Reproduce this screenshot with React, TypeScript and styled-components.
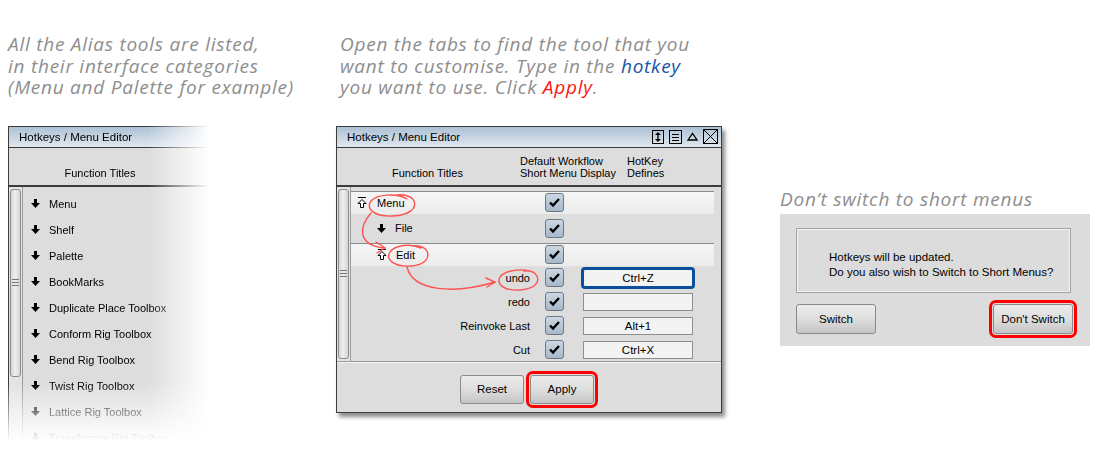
import styled, { createGlobalStyle } from 'styled-components';

const GlobalStyle = createGlobalStyle`
  html, body {
    margin: 0;
    padding: 0;
    background: #fff;
  }
  body {
    width: 1100px;
    height: 470px;
    overflow: hidden;
    font-family: "Liberation Sans", Arial, sans-serif;
    font-size: 11px;
    color: #000;
  }
`;

const Page = styled.div`
  display: flex;
  height: 470px;
  padding-top: 34px;
  box-sizing: border-box;
`;

const Column = styled.div<{ $width: number; $pad?: number }>`
  display: flex;
  flex-direction: column;
  width: ${(p) => p.$width}px;
  padding-left: ${(p) => p.$pad ?? 0}px;
  box-sizing: border-box;
  flex-shrink: 0;
`;

const Caption = styled.p<{ $indent?: number; $top?: number }>`
  margin: ${(p) => p.$top ?? 0}px 0 0 ${(p) => p.$indent ?? 0}px;
  font-family: "Open Sans", "DejaVu Sans", sans-serif;
  font-style: italic;
  font-size: 19px;
  line-height: 21.5px;
  color: #8e8e8e;
  letter-spacing: 0.75px;
  white-space: nowrap;
`;

const Hot = styled.span`
  color: #1656a6;
`;

const Red = styled.span`
  color: #ff1414;
`;

/* ---------- editor window ---------- */

const FadeRight = styled.div`
  margin-top: 27px;
  width: 212px;
  -webkit-mask-image: linear-gradient(to right, #000 66%, transparent 95%);
  mask-image: linear-gradient(to right, #000 66%, transparent 95%);
`;

const FadeDown = styled.div`
  -webkit-mask-image: linear-gradient(to bottom, #000 79%, transparent 97%);
  mask-image: linear-gradient(to bottom, #000 79%, transparent 97%);
`;

const Window = styled.div<{ $width: number; $height: number; $shadow?: boolean }>`
  position: relative;
  display: flex;
  flex-direction: column;
  width: ${(p) => p.$width}px;
  height: ${(p) => p.$height}px;
  box-sizing: border-box;
  border: 1px solid #3c3c3c;
  background: #dddddd;
  box-shadow: ${(p) => (p.$shadow ? '3px 4px 4px rgba(0,0,0,0.45)' : 'none')};
`;

const TitleBar = styled.div`
  display: flex;
  align-items: center;
  height: 20px;
  padding: 0 3px 0 10px;
  background: linear-gradient(#adc1d5, #e0e7ee);
  border-bottom: 1px solid #3a3a3a;
  font-size: 11.5px;
  flex-shrink: 0;
`;

const TitleText = styled.span`
  flex: 1;
`;

const TitleIcons = styled.div`
  display: flex;
  align-items: center;
  gap: 5px;
`;

const Header = styled.div<{ $pad: number }>`
  display: flex;
  align-items: flex-end;
  height: 39px;
  padding: 0 0 6px ${(p) => p.$pad}px;
  box-sizing: border-box;
  border-bottom: 2px solid #3c3c3c;
  line-height: 12px;
  flex-shrink: 0;
`;

const HeaderCell = styled.div<{ $width?: number; $center?: boolean }>`
  width: ${(p) => (p.$width ? `${p.$width}px` : 'auto')};
  text-align: ${(p) => (p.$center ? 'center' : 'left')};
`;

const Body = styled.div<{ $height?: number }>`
  display: flex;
  flex: ${(p) => (p.$height ? 'none' : '1')};
  height: ${(p) => (p.$height ? `${p.$height}px` : 'auto')};
`;

const Scrollbar = styled.div`
  display: flex;
  flex-direction: column;
  width: 14px;
  padding: 2px 1px;
  box-sizing: border-box;
  background: #e3e3e3;
  border-right: 1px solid #9c9c9c;
  flex-shrink: 0;
`;

const Thumb = styled.div<{ $height?: number }>`
  display: flex;
  align-items: center;
  justify-content: center;
  height: ${(p) => (p.$height ? `${p.$height}px` : 'auto')};
  flex: ${(p) => (p.$height ? 'none' : '1')};
  border: 1px solid #8e8e8e;
  border-radius: 3px;
  background: linear-gradient(to right, #d6d6d6, #efefef 45%, #d4d4d4);
`;

const Grip = styled.div`
  width: 7px;
  height: 7px;
  background: repeating-linear-gradient(#777 0 1px, transparent 1px 3px);
`;

const List = styled.div<{ $padTop: number; $padRight?: number }>`
  flex: 1;
  padding: ${(p) => p.$padTop}px ${(p) => p.$padRight ?? 0}px 0 0;
  overflow: hidden;
`;

/* left window rows */

const MenuItem = styled.div`
  display: flex;
  align-items: center;
  gap: 9px;
  height: 26px;
  padding-left: 8px;
  white-space: nowrap;
`;

/* right window rows */

const Row = styled.div<{ $height: number; $band?: boolean; $line?: boolean }>`
  display: grid;
  grid-template-columns: 194px 38px 110px;
  align-items: center;
  height: ${(p) => p.$height}px;
  border-top: ${(p) => (p.$line ? '1px solid #8a8a8a' : 'none')};
  background: ${(p) => (p.$band ? 'linear-gradient(#f5f5f5, #ececec)' : 'transparent')};
`;

const TreeName = styled.div<{ $indent: number; $gap: number }>`
  display: flex;
  align-items: center;
  gap: ${(p) => p.$gap}px;
  padding-left: ${(p) => p.$indent}px;
`;

const LeafName = styled.div`
  text-align: right;
  padding-right: 15px;
`;

const Check = styled.div`
  display: flex;
  align-items: center;
  justify-content: center;
  width: 19px;
  height: 19px;
  box-sizing: border-box;
  border: 1px solid #6c7886;
  border-radius: 3px;
  background: linear-gradient(#cbd7e3, #a6b8cb);
`;

const KeyField = styled.div<{ $focus?: boolean }>`
  height: 18px;
  line-height: 16px;
  box-sizing: border-box;
  text-align: center;
  background: #f3f3f3;
  border: 1px solid ${(p) => (p.$focus ? '#0a4f9c' : '#8e8e8e')};
  box-shadow: ${(p) => (p.$focus ? '0 0 0 2px #0a4f9c' : 'none')};
  border-radius: ${(p) => (p.$focus ? '2px' : '0')};
  font-size: 11.5px;
`;

const Footer = styled.div`
  display: flex;
  align-items: center;
  justify-content: center;
  gap: 2px;
  flex: 1;
  border-top: 1px solid #9a9a9a;
  box-shadow: inset 0 1px 0 #f4f4f4;
  padding-top: 5px;
`;

const Button = styled.button<{ $width: number; $height: number }>`
  width: ${(p) => p.$width}px;
  height: ${(p) => p.$height}px;
  padding: 0;
  border: 1px solid #8a8a8a;
  border-radius: 3px;
  background: linear-gradient(#ececec, #dcdcdc 55%, #c4c4c4);
  font-family: "Liberation Sans", Arial, sans-serif;
  font-size: 11.5px;
  color: #000;
`;

const RedRing = styled.div`
  display: flex;
  padding: 1px;
  border: 3px solid #f00;
  border-radius: 7px;
`;

const Marks = styled.svg`
  position: absolute;
  left: 0;
  top: 0;
  pointer-events: none;
`;

/* ---------- switch dialog ---------- */

const Dialog = styled.div`
  margin-top: 3px;
  width: 310px;
  height: 132px;
  padding: 14px 13px 0 16px;
  box-sizing: border-box;
  background: #dcdcdc;
`;

const Message = styled.div`
  width: 275px;
  height: 65px;
  padding: 21px 0 0 32px;
  box-sizing: border-box;
  border: 1px solid #a2a2a2;
  box-shadow: inset 0 0 0 1px #f2f2f2;
  line-height: 15px;
  font-size: 11.5px;
`;

const DialogButtons = styled.div`
  display: flex;
  align-items: center;
  justify-content: space-between;
  margin-top: 7px;
`;

/* ---------- icons ---------- */

const DownArrow = () => (
  <svg width="9" height="9" viewBox="0 0 9 9">
    <polygon points="3,0 6,0 6,4 9,4 4.5,9 0,4 3,4" fill="#000" />
  </svg>
);

const Collapse = () => (
  <svg width="10" height="11" viewBox="0 0 10 11">
    <path d="M1 0.5H9" stroke="#000" strokeWidth="1" />
    <path d="M5 2.5 L1 6.5 H3.5 V10.5 H6.5 V6.5 H9 Z" fill="#fff" stroke="#000" strokeWidth="1" />
  </svg>
);

const Tick = () => (
  <svg width="17" height="17" viewBox="0 0 17 17">
    <path d="M4 8.5 L7 11.5 L13 5" fill="none" stroke="#000" strokeWidth="2.4" />
  </svg>
);

const SizeIcon = () => (
  <svg width="12" height="14" viewBox="0 0 12 14">
    <rect x="0.5" y="0.5" width="11" height="13" fill="none" stroke="#000" />
    <path d="M6 4 V10" stroke="#000" strokeWidth="1.4" />
    <polygon points="3,5 6,2 9,5" fill="#000" />
    <polygon points="3,9 6,12 9,9" fill="#000" />
  </svg>
);

const ListIcon = () => (
  <svg width="13" height="14" viewBox="0 0 13 14">
    <rect x="0.5" y="0.5" width="12" height="13" fill="none" stroke="#000" />
    <path d="M3 4.5H10 M3 7.5H10 M3 10.5H10" stroke="#000" />
  </svg>
);

const ShadeIcon = () => (
  <svg width="11" height="9" viewBox="0 0 11 9">
    <polygon points="1,8 5.5,1.5 10,8" fill="none" stroke="#000" strokeWidth="1.3" />
  </svg>
);

const CloseIcon = () => (
  <svg width="15" height="15" viewBox="0 0 15 15">
    <rect x="0.5" y="0.5" width="14" height="14" fill="none" stroke="#000" />
    <path d="M1 1 L14 14 M14 1 L1 14" stroke="#000" />
  </svg>
);

const leftItems = [
  'Menu',
  'Shelf',
  'Palette',
  'BookMarks',
  'Duplicate Place Toolbox',
  'Conform Rig Toolbox',
  'Bend Rig Toolbox',
  'Twist Rig Toolbox',
  'Lattice Rig Toolbox',
  'Transformer Rig Toolbox',
];

const leafRows = [
  { name: 'undo', key: 'Ctrl+Z', focus: true },
  { name: 'redo', key: '' },
  { name: 'Reinvoke Last', key: 'Alt+1' },
  { name: 'Cut', key: 'Ctrl+X' },
];

// hand-drawn red loops and arrows over the editor
const Annotations = () => (
  <Marks width="384" height="285" viewBox="0 0 384 285">
    <g fill="none" stroke="#ff4646" strokeWidth="1.4" strokeLinecap="round" opacity="0.92">
      <path d="M70 72 C 60 66, 40 67, 34 74 C 28 82, 38 90, 56 89 C 72 88, 80 82, 77 74 C 75 69, 66 67, 60 68" />
      <path d="M84 121 C 74 116, 58 118, 53 125 C 48 133, 58 140, 74 139 C 88 138, 93 131, 90 124 C 88 120, 81 118, 76 119" />
      <path d="M196 145 C 186 141, 168 143, 163 150 C 159 158, 168 164, 183 163 C 197 162, 203 156, 200 149 C 198 145, 192 143, 187 144" />
      <path d="M34 86 C 22 100, 20 118, 47 121" />
      <path d="M39 115 L48 121 L40 126" />
      <path d="M70 140 C 76 165, 118 167, 158 155" />
      <path d="M149 151 L158 155 L150 160" />
    </g>
  </Marks>
);

export default function App() {
  return (
    <>
      <GlobalStyle />
      <Page>
        <Column $width={336} $pad={8}>
          <Caption>
            All the Alias tools are listed,
            <br />
            in their interface categories
            <br />
            (Menu and Palette for example)
          </Caption>
          <FadeRight>
            <FadeDown>
              <Window $width={212} $height={325}>
                <TitleBar>
                  <TitleText>Hotkeys / Menu Editor</TitleText>
                </TitleBar>
                <Header $pad={0}>
                  <HeaderCell $width={182} $center>
                    Function Titles
                  </HeaderCell>
                </Header>
                <Body>
                  <Scrollbar>
                    <Thumb $height={186}>
                      <Grip />
                    </Thumb>
                  </Scrollbar>
                  <List $padTop={4}>
                    {leftItems.map((item) => (
                      <MenuItem key={item}>
                        <DownArrow />
                        {item}
                      </MenuItem>
                    ))}
                  </List>
                </Body>
              </Window>
            </FadeDown>
          </FadeRight>
        </Column>

        <Column $width={444}>
          <Caption $indent={4}>
            Open the tabs to find the tool that you
            <br />
            want to customise. Type in the <Hot>hotkey</Hot>
            <br />
            you want to use. Click <Red>Apply</Red>.
          </Caption>
          <Window $width={386} $height={287} $shadow style={{ marginTop: 27 }}>
            <TitleBar>
              <TitleText>Hotkeys / Menu Editor</TitleText>
              <TitleIcons>
                <SizeIcon />
                <ListIcon />
                <ShadeIcon />
                <CloseIcon />
              </TitleIcons>
            </TitleBar>
            <Header $pad={55}>
              <HeaderCell $width={128}>Function Titles</HeaderCell>
              <HeaderCell $width={107}>
                Default Workflow
                <br />
                Short Menu Display
              </HeaderCell>
              <HeaderCell>
                HotKey
                <br />
                Defines
              </HeaderCell>
            </Header>
            <Body $height={174}>
              <Scrollbar>
                <Thumb>
                  <Grip />
                </Thumb>
              </Scrollbar>
              <List $padTop={4} $padRight={7}>
                <Row $height={22} $band $line>
                  <TreeName $indent={6} $gap={10}>
                    <Collapse />
                    Menu
                  </TreeName>
                  <Check>
                    <Tick />
                  </Check>
                </Row>
                <Row $height={29}>
                  <TreeName $indent={26} $gap={9}>
                    <DownArrow />
                    File
                  </TreeName>
                  <Check>
                    <Tick />
                  </Check>
                </Row>
                <Row $height={22} $band $line>
                  <TreeName $indent={26} $gap={9}>
                    <Collapse />
                    Edit
                  </TreeName>
                  <Check>
                    <Tick />
                  </Check>
                </Row>
                {leafRows.map((r) => (
                  <Row key={r.name} $height={24}>
                    <LeafName>{r.name}</LeafName>
                    <Check>
                      <Tick />
                    </Check>
                    <KeyField $focus={r.focus}>{r.key}</KeyField>
                  </Row>
                ))}
              </List>
            </Body>
            <Footer>
              <Button $width={64} $height={29}>
                Reset
              </Button>
              <RedRing>
                <Button $width={64} $height={29}>
                  Apply
                </Button>
              </RedRing>
            </Footer>
            <Annotations />
          </Window>
        </Column>

        <Column $width={320}>
          <Caption $top={155}>Don’t switch to short menus</Caption>
          <Dialog>
            <Message>
              Hotkeys will be updated.
              <br />
              Do you also wish to Switch to Short Menus?
            </Message>
            <DialogButtons>
              <Button $width={80} $height={30}>
                Switch
              </Button>
              <RedRing>
                <Button $width={80} $height={30}>
                  Don't Switch
                </Button>
              </RedRing>
            </DialogButtons>
          </Dialog>
        </Column>
      </Page>
    </>
  );
}
